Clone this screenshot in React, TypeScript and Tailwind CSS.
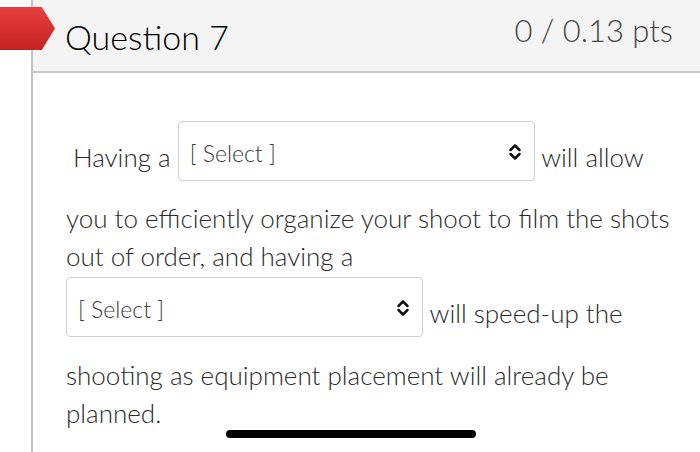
import React from "react";

// up/down caret used by the native-looking selects
function Caret() {
  return (
    <svg width="14" height="18" viewBox="0 0 14 18" className="shrink-0">
      <path d="M2.5 7 L7 2.5 L11.5 7" fill="none" stroke="#111" strokeWidth="2.5" strokeLinecap="round" strokeLinejoin="round" />
      <path d="M2.5 11 L7 15.5 L11.5 11" fill="none" stroke="#111" strokeWidth="2.5" strokeLinecap="round" strokeLinejoin="round" />
    </svg>
  );
}

function Select({ className = "" }: { className?: string }) {
  return (
    <span
      className={
        "inline-flex w-[357px] h-[60px] items-start justify-between border border-[#cfcfcf] rounded-[4px] bg-white pl-[11px] pr-[12px] pt-[18px] text-[23px] leading-[26px] text-[#3a3a3a] align-[5px] indent-0 " +
        className
      }
    >
      <span>[ Select ]</span>
      <span className="pt-[3px]">
        <Caret />
      </span>
    </span>
  );
}

export default function App() {
  return (
    <div className="relative w-[700px] h-[452px] overflow-hidden bg-white font-['Lato',sans-serif]">
      {/* question card, left rule runs full height */}
      <div className="ml-[31px] h-full border-l-2 border-[#c4c4c4]">
        <header className="h-[73px] bg-[#f4f4f4] border-b-2 border-[#c8c8c8] flex items-center justify-between pl-[32px] pr-[27px]">
          <h2 className="text-[34px] font-light text-[#000] pt-[2px]">Question 7</h2>
          <span className="text-[31px] font-light text-[#444] pb-[10px]">0 / 0.13 pts</span>
        </header>

        <p className="pt-[48px] pl-[33px] pr-[20px] text-[26px] font-light leading-[38px] text-[#2a2a2a] indent-[7px]">
          Having a <Select className="mb-[18px]" /> will allow you to efficiently organize your shoot to film the
          shots out of order, and having a <Select className="mt-[2px] mb-[19px]" /> will speed-up the shooting as
          equipment placement will already be planned.
        </p>
      </div>

      {/* red flag marker */}
      <div className="absolute left-0 top-[7px] w-[55px] h-[43px] bg-linear-to-b from-[#e5403f] to-[#c42222] [clip-path:polygon(0_0,76%_0,100%_50%,76%_100%,0_100%)]" />

      {/* home indicator */}
      <div className="absolute left-[226px] top-[430px] w-[250px] h-[8px] rounded-full bg-black" />
    </div>
  );
}
